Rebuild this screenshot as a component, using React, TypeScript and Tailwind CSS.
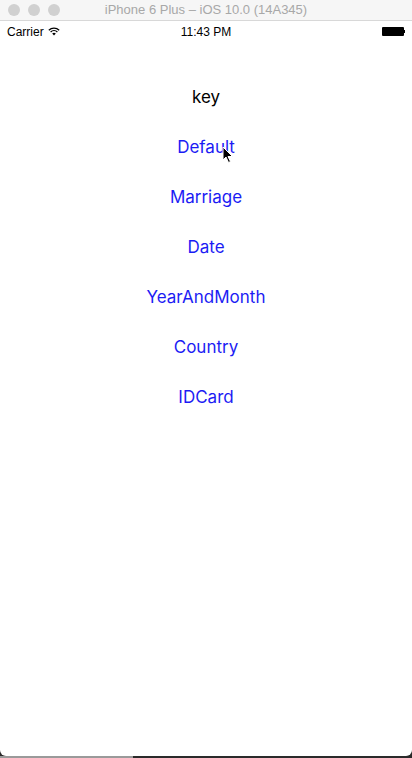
import React from 'react';

const items = ['Default', 'Marriage', 'Date', 'YearAndMonth', 'Country', 'IDCard'];

const Cursor = () => (
  <svg width="12" height="18" viewBox="0 0 12 18" className="absolute left-[222px] top-[146px]">
    <path d="M1 1 L1 14 L4 11 L6.5 16.5 L8.5 15.5 L6 10.5 L10.5 10.5 Z" fill="#000" stroke="#fff" strokeWidth="1" />
  </svg>
);

export default function App() {
  return (
    <div className="relative w-[412px] h-[758px] bg-[#2a2a2a] overflow-hidden">
      <div className="flex flex-col h-[756px] bg-white rounded-b-[6px] overflow-hidden">
        {/* simulator title bar */}
        <div className="relative flex items-center h-[21px] bg-[#f6f6f6] border-b border-[#d8d8d8] shrink-0">
          <div className="flex gap-[8px] pl-[8px]">
            <span className="w-[12px] h-[12px] rounded-full bg-[#d0d0d0]" />
            <span className="w-[12px] h-[12px] rounded-full bg-[#d0d0d0]" />
            <span className="w-[12px] h-[12px] rounded-full bg-[#d0d0d0]" />
          </div>
          <div className="absolute inset-0 flex items-center justify-center text-[13px] text-[#a8a8a8] font-['Liberation_Sans',sans-serif]">
            iPhone 6 Plus – iOS 10.0 (14A345)
          </div>
        </div>

        {/* status bar */}
        <div className="relative flex items-center h-[21px] px-[7px] text-[12px] text-black font-['Liberation_Sans',sans-serif] shrink-0">
          <div className="flex items-center gap-[4px]">
            <span>Carrier</span>
            <svg width="12" height="9" viewBox="0 0 12 9">
              <path d="M6 8.5 L4.2 6.6 A2.6 2.6 0 0 1 7.8 6.6 Z" fill="#000" />
              <path d="M2.6 5 A4.9 4.9 0 0 1 9.4 5" fill="none" stroke="#000" strokeWidth="1.2" />
              <path d="M0.8 3.2 A7.4 7.4 0 0 1 11.2 3.2" fill="none" stroke="#000" strokeWidth="1.2" />
            </svg>
          </div>
          <div className="absolute inset-0 flex items-center justify-center">11:43 PM</div>
          <div className="ml-auto flex items-center">
            <span className="w-[22px] h-[9px] bg-black rounded-[1px]" />
            <span className="w-[1.5px] h-[3px] bg-black" />
          </div>
        </div>

        {/* content */}
        <div className="flex flex-col items-center pt-[31px] font-['Inter',sans-serif] text-[17px]">
          <div className="h-[50px] flex items-center text-black">key</div>
          {items.map((t) => (
            <div key={t} className="h-[50px] flex items-center text-[#1c1cf4]">
              {t}
            </div>
          ))}
        </div>
      </div>
      <div className="absolute left-0 bottom-0 h-[2px] w-[133px] bg-[#9a9a9a]" />
      <Cursor />
    </div>
  );
}
